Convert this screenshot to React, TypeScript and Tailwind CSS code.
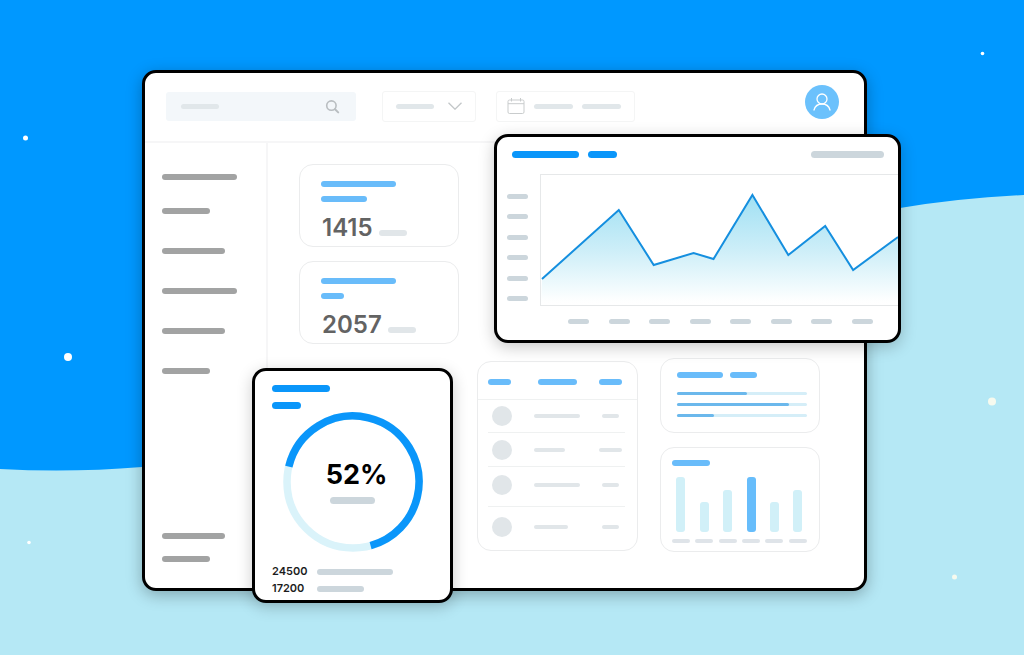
import type { ReactNode } from 'react';
import clsx from 'clsx';

type BarProps = {
  className: string;
};

// Placeholder line used everywhere in place of copy
const Bar = ({ className }: BarProps) => (
  <span className={clsx('block shrink-0 rounded-full', className)} />
);

const navMain = [
  { name: 'Overview', width: 'w-[75px]' },
  { name: 'Sales', width: 'w-12' },
  { name: 'Customers', width: 'w-[63px]' },
  { name: 'Campaigns', width: 'w-[75px]' },
  { name: 'Products', width: 'w-[63px]' },
  { name: 'Teams', width: 'w-12' },
];

const navFooter = [
  { name: 'Settings', width: 'w-[63px]' },
  { name: 'Help', width: 'w-12' },
];

const stats = [
  { value: '1415', subtitle: 'w-[46px]' },
  { value: '2057', subtitle: 'w-[23px]' },
];

const tableRows = [
  { height: 'h-[34px]', name: 'w-[46px]', amount: 'w-[17px]' },
  { height: 'h-[34px]', name: 'w-[31px]', amount: 'w-[23px]' },
  { height: 'h-10 [&>td]:pb-1', name: 'w-[46px]', amount: 'w-[17px]' },
  { height: 'h-10', name: 'w-[34px]', amount: 'w-[17px]' },
];

const progress = [54, 86, 29];

const columns = [55, 30, 42, 55, 30, 42];

const linePoints = '1,105 78,36 113,91 153,79 173,85 212,21 248,81 285,52 313,96 358,63';

const Backdrop = () => (
  <svg
    className="absolute inset-0 h-full w-full"
    viewBox="0 0 1024 655"
    preserveAspectRatio="none"
    aria-hidden="true"
  >
    <path
      d="M0 469 Q70 473 142 467 C400 450 600 258 900 208 Q960 198 1024 195 V655 H0 Z"
      fill="#b5e8f5"
    />
    <g fill="#ffffff">
      <circle cx="25.5" cy="138" r="2.5" />
      <circle cx="68" cy="357" r="4" />
      <circle cx="29" cy="542.5" r="1.8" />
      <circle cx="982.5" cy="53.5" r="1.8" />
    </g>
    <g fill="#f6faef">
      <circle cx="992" cy="401.5" r="4" />
      <circle cx="954.5" cy="577" r="2.5" />
    </g>
  </svg>
);

const Header = () => (
  <header className="flex h-[70px] items-center border-b-2 border-[#f6f6f7] pr-[25px] pb-0.5 pl-[21px]">
    <label className="flex h-[29px] w-[190px] items-center rounded-[3px] bg-[#f3f7fa] pr-4 pl-[15px]">
      <Bar className="h-[5px] w-[38px] bg-[#e1e7ea]" />
      <input type="search" aria-label="Search" className="min-w-0 flex-1 bg-transparent outline-none" />
      <svg className="h-[15px] w-[15px]" viewBox="0 0 15 15" fill="none" stroke="#b9bec1" strokeLinecap="round">
        <circle cx="6.4" cy="6.6" r="4.7" strokeWidth="1.6" />
        <path d="M10 10.3 13.2 13.4" strokeWidth="2" />
      </svg>
    </label>
    <button
      type="button"
      aria-label="Category"
      className="ml-[26px] flex h-[31px] w-[94px] items-center justify-between rounded-[3px] border border-[#f4f5f5] px-[13px]"
    >
      <Bar className="h-[5px] w-[38px] bg-[#e1e7ea]" />
      <svg className="h-2 w-[14px]" viewBox="0 0 14 8" fill="none" stroke="#c3c7c9" strokeWidth="1.3">
        <path d="M0.5 0.7 7 7.2 13.5 0.7" />
      </svg>
    </button>
    <button
      type="button"
      aria-label="Date range"
      className="ml-5 flex h-[31px] w-[139px] items-center rounded-[3px] border border-[#f4f5f5] pl-2.5"
    >
      <svg className="h-4 w-[18px]" viewBox="0 0 18 16" fill="none" stroke="#c9cccd">
        <rect x="1" y="2" width="16" height="13.5" rx="1.5" />
        <path d="M1 5.7H17M4.5 0V3.5M13.5 0V3.5" />
      </svg>
      <Bar className="ml-[9px] h-[5px] w-[39px] bg-[#e1e7ea]" />
      <Bar className="ml-[9px] h-[5px] w-[39px] bg-[#e1e7ea]" />
    </button>
    <button
      type="button"
      aria-label="Account"
      className="mt-3 ml-auto flex h-[34px] w-[34px] items-center justify-center self-start rounded-full bg-[#6bc1fc]"
    >
      <svg className="h-[18px] w-[18px]" viewBox="0 0 18 18" fill="none" stroke="#ffffff" strokeWidth="1.3" strokeLinecap="round">
        <circle cx="9" cy="6" r="5" />
        <path d="M1 17C2 13.2 5 11 9 11S16 13.2 17 17" />
      </svg>
    </button>
  </header>
);

const Sidebar = () => (
  <nav className="flex w-[123px] shrink-0 flex-col border-r-2 border-[#f6f6f7] pt-[31px] pb-[26px] pl-[17px]">
    <ul className="flex flex-col gap-[34px]">
      {navMain.map((item, index) => (
        <li key={item.name} className={clsx(index === 0 && '-mb-1.5')}>
          <a href="#" aria-label={item.name} className="block">
            <Bar className={clsx('h-1.5 bg-[#a2a3a3]', item.width)} />
          </a>
        </li>
      ))}
    </ul>
    <ul className="mt-auto flex flex-col gap-[17px]">
      {navFooter.map((item) => (
        <li key={item.name}>
          <a href="#" aria-label={item.name} className="block">
            <Bar className={clsx('h-1.5 bg-[#a2a3a3]', item.width)} />
          </a>
        </li>
      ))}
    </ul>
  </nav>
);

const Card = ({ className, children }: { className?: string; children: ReactNode }) => (
  <section className={clsx('rounded-[14px] border border-[#ebeced] bg-white', className)}>{children}</section>
);

const StatCard = ({ value, subtitle }: { value: string; subtitle: string }) => (
  <Card className="h-[83px] pt-4 pl-[21px]">
    <Bar className="h-1.5 w-[75px] bg-[#69bcfa]" />
    <Bar className={clsx('mt-[9px] h-1.5 bg-[#69bcfa]', subtitle)} />
    <div className="mt-[13px] flex items-end gap-1.5 pl-px">
      <span className="text-2xl leading-[26px] font-semibold text-[#636363]">{value}</span>
      <Bar className="mb-[5px] h-1.5 w-7 bg-[#e1e6e9]" />
    </div>
  </Card>
);

// Inset row separator, drawn cell by cell
const rowLine = 'relative after:absolute after:bottom-0 after:h-px after:bg-[#eff1f1] group-last:after:hidden';

const TableCard = () => (
  <Card className="h-[190px]">
    <table className="w-full table-fixed">
      <thead>
        <tr className="h-[37px] border-b border-[#eff1f1]">
          <th aria-label="User" className="w-[56px] pt-1 pl-2.5">
            <Bar className="h-1.5 w-[23px] bg-[#69bcfa]" />
          </th>
          <th aria-label="Name" className="pt-1 pl-1">
            <Bar className="h-1.5 w-[39px] bg-[#69bcfa]" />
          </th>
          <th aria-label="Amount" className="w-[52px] pt-1">
            <Bar className="mx-auto h-1.5 w-[23px] bg-[#69bcfa]" />
          </th>
        </tr>
      </thead>
      <tbody>
        {tableRows.map((row, index) => (
          <tr key={index} className={clsx('group', row.height)}>
            <td className={clsx(rowLine, 'pl-3.5 after:right-0 after:left-2.5')}>
              <span className="block h-5 w-5 rounded-full bg-[#e1e6e9]" />
            </td>
            <td className={clsx(rowLine, 'after:inset-x-0')}>
              <Bar className={clsx('h-1 bg-[#e1e6e9]', row.name)} />
            </td>
            <td className={clsx(rowLine, 'after:right-3 after:left-0')}>
              <Bar className={clsx('mx-auto h-1 bg-[#e1e6e9]', row.amount)} />
            </td>
          </tr>
        ))}
      </tbody>
    </table>
  </Card>
);

const ProgressCard = () => (
  <Card className="h-[75px] pt-[13px] pr-3 pl-4">
    <div className="flex gap-[7px]">
      <Bar className="h-1.5 w-[46px] bg-[#69bcfa]" />
      <Bar className="h-1.5 w-[27px] bg-[#69bcfa]" />
    </div>
    <div className="mt-3.5 flex flex-col gap-2">
      {progress.map((value, index) => (
        <div
          key={index}
          role="progressbar"
          aria-valuenow={value}
          aria-label={`Goal ${index + 1}`}
          className="h-[3px] rounded-full bg-[#d5eef8]"
        >
          <div className="h-full rounded-full bg-[#6bb8ec]" style={{ width: `${value}%` }} />
        </div>
      ))}
    </div>
  </Card>
);

const ColumnsCard = () => (
  <Card className="mt-3.5 h-[105px] pt-3 pr-3 pl-[11px]">
    <Bar className="h-1.5 w-[38px] bg-[#69bcfa]" />
    <div className="mt-[11px] flex h-[66px] items-end justify-between">
      {columns.map((height, index) => (
        <div key={index} className="flex flex-col items-center gap-[7px]">
          <div
            className={clsx('w-[9px] rounded-[3px]', index === 3 ? 'bg-[#67bdfb]' : 'bg-[#d1f0f8]')}
            style={{ height }}
          />
          <Bar className="h-1 w-[18px] bg-[#dfe4e9]" />
        </div>
      ))}
    </div>
  </Card>
);

const ChartPanel = () => (
  <section className="absolute top-16 -right-[34px] left-[352px] overflow-hidden rounded-[14px] border-3 border-black bg-white pb-4 shadow-[0_4px_16px_rgba(0,0,0,0.22)]">
    <div className="flex items-center pt-3.5 pr-3.5 pl-[15px]">
      <Bar className="h-[7px] w-[67px] bg-[#0a96fa]" />
      <Bar className="ml-[9px] h-[7px] w-[29px] bg-[#0a96fa]" />
      <Bar className="ml-auto h-[7px] w-[73px] bg-[#ccd6dc]" />
    </div>
    <div className="mt-4 flex">
      <div className="flex w-[43px] shrink-0 flex-col justify-between pt-5 pb-[5px] pl-2.5">
        {[0, 1, 2, 3, 4, 5].map((tick) => (
          <Bar key={tick} className="h-[5px] w-[21px] bg-[#ccd6dc]" />
        ))}
      </div>
      <div className="h-[132px] min-w-0 flex-1 border-y border-l border-[#e6e8e9]">
        <svg className="-my-px block h-[132px] w-full" viewBox="0 0 358 132" preserveAspectRatio="none">
          <defs>
            <linearGradient id="area" x1="0" y1="20" x2="0" y2="132" gradientUnits="userSpaceOnUse">
              <stop offset="0" stopColor="#9fe0f3" />
              <stop offset="0.5" stopColor="#cdeef8" />
              <stop offset="0.9" stopColor="#f8fdfe" />
              <stop offset="1" stopColor="#ffffff" stopOpacity="0" />
            </linearGradient>
          </defs>
          <polygon points={`0,131 ${linePoints} 358,131`} fill="url(#area)" />
          <polyline
            points={linePoints}
            fill="none"
            stroke="#158fdf"
            strokeWidth="2"
            vectorEffect="non-scaling-stroke"
          />
        </svg>
      </div>
    </div>
    <div className="mt-[13px] flex justify-between pr-[25px] pl-[71px]">
      {[0, 1, 2, 3, 4, 5, 6, 7].map((tick) => (
        <Bar key={tick} className="h-[5px] w-[21px] bg-[#ccd6dc]" />
      ))}
    </div>
  </section>
);

const GaugePanel = () => (
  <section className="absolute -bottom-3 left-[110px] w-[201px] rounded-[14px] border-3 border-black bg-white pt-3.5 pb-[3px] shadow-[0_4px_16px_rgba(0,0,0,0.2)]">
    <div className="flex flex-col gap-2.5 pl-[17px]">
      <Bar className="h-[7px] w-[58px] bg-[#0a96fa]" />
      <Bar className="h-[7px] w-[29px] bg-[#0a96fa]" />
    </div>
    <div className="mx-auto mt-[3px] grid h-[140px] w-[140px] place-items-center">
      <svg className="col-start-1 row-start-1 h-full w-full" viewBox="0 0 140 140" fill="none" strokeWidth="7.5">
        <circle cx="70" cy="70" r="66" stroke="#daf3fa" />
        <circle
          cx="70"
          cy="70"
          r="66"
          stroke="#0a96fa"
          pathLength="360"
          strokeDasharray="241 119"
          transform="rotate(193.5 70 70)"
        />
      </svg>
      <div className="col-start-1 row-start-1 flex flex-col items-center pb-0.5">
        <span className="ml-2 text-[27px] leading-8 font-bold text-black">52%</span>
        <Bar className="mt-1.5 h-[7px] w-[45px] bg-[#ccd6dc]" />
      </div>
    </div>
    <dl className="mt-[11px] pl-[17px] text-[11px] leading-[17px] font-semibold text-[#1c1c1c]">
      <div className="flex items-center">
        <dt className="w-[45px]">24500</dt>
        <dd>
          <Bar className="h-1.5 w-[76px] bg-[#ccd6dc]" />
        </dd>
      </div>
      <div className="flex items-center">
        <dt className="w-[45px]">17200</dt>
        <dd>
          <Bar className="h-1.5 w-[47px] bg-[#ccd6dc]" />
        </dd>
      </div>
    </dl>
  </section>
);

const App = () => {
  return (
    <div className="relative min-h-screen overflow-hidden bg-[#0098ff] pt-[70px] pr-[157px] pb-16 pl-[142px] font-['Inter',sans-serif]">
      <Backdrop />
      <div className="relative">
        <div className="rounded-[14px] border-3 border-black bg-white shadow-[0_4px_16px_rgba(0,0,0,0.28)]">
          <Header />
          <div className="flex">
            <Sidebar />
            <main className="flex min-w-0 flex-1 pr-11 pb-9 pl-[31px]">
              <div className="flex flex-1 flex-col gap-3.5 pt-[21px]">
                {stats.map((stat) => (
                  <StatCard key={stat.value} value={stat.value} subtitle={stat.subtitle} />
                ))}
              </div>
              <div className="ml-[18px] flex-1 pt-[218px]">
                <TableCard />
              </div>
              <div className="ml-[22px] flex-1 pt-[215px]">
                <ProgressCard />
                <ColumnsCard />
              </div>
            </main>
          </div>
        </div>
        <ChartPanel />
        <GaugePanel />
      </div>
    </div>
  );
};

export default App;
